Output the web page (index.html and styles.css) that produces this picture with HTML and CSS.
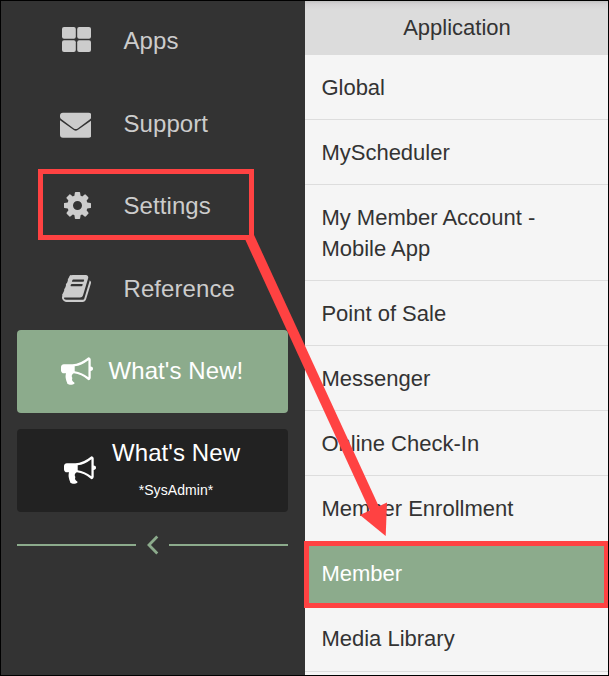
FILE: index.html
```html
<!DOCTYPE html>
<html lang="en">
<head>
<meta charset="utf-8">
<title>Settings</title>
<link rel="stylesheet" href="styles.css">
</head>
<body>
<div class="app">
  <aside class="sidebar">
    <nav class="nav">
      <a class="nav-item"><span class="nav-icon"><svg class="ico-apps" viewBox="0 0 29 25"><rect width="13.8" height="11.8" rx="2"/><rect x="15.2" width="13.8" height="11.8" rx="2"/><rect y="13.2" width="13.8" height="11.8" rx="2"/><rect x="15.2" y="13.2" width="13.8" height="11.8" rx="2"/></svg></span><span>Apps</span></a>
      <a class="nav-item"><span class="nav-icon"><svg class="ico-mail" viewBox="0 0 32 26"><path d="M3 .5H29Q32 .5 32 3.500V4.500Q32 6 30.500 7.200L18 16.500Q16 17.800 14 16.500L1.500 7.200Q0 6 0 4.500V3.500Q0 .5 3 .5ZM0 8.200L14 18.200Q16 19.400 18 18.200L32 8.200V23Q32 26 29 26H3Q0 26 0 23Z"/></svg></span><span>Support</span></a>
      <a class="nav-item"><span class="nav-icon"><svg class="ico-cog" viewBox="128 128 1536 1536"><path d="M1152 896q0-106-75-181t-181-75-181 75-75 181 75 181 181 75 181-75 75-181zm512-109v222q0 12-8 23t-20 13l-185 28q-19 54-39 91 35 50 107 138 10 12 10 25t-9 23q-27 37-99 108t-94 71q-12 0-26-9l-138-108q-44 23-91 38-16 136-29 186-7 28-36 28h-222q-14 0-24.5-8.5t-11.5-21.5l-28-184q-49-16-90-37l-141 107q-10 9-25 9-14 0-25-11-126-114-165-168-7-10-7-23 0-12 8-23 15-21 51-66.5t54-70.5q-27-50-41-99l-183-27q-13-2-21-12.5t-8-23.5v-222q0-12 8-23t19-13l186-28q14-46 39-92-40-57-107-138-10-12-10-24 0-10 9-23 26-36 98.5-107.5t94.5-71.5q13 0 26 10l138 107q44-23 91-38 16-136 29-186 7-28 36-28h222q14 0 24.5 8.5t11.5 21.5l28 184q49 16 90 37l142-107q9-9 24-9 13 0 25 10 129 119 165 170 7 8 7 22 0 12-8 23-15 21-51 66.5t-54 70.5q26 50 41 98l183 28q13 2 21 12.5t8 23.5z"/></svg></span><span>Settings</span></a>
      <a class="nav-item"><span class="nav-icon"><svg class="ico-book" viewBox="64 128 1664 1536"><path d="M1703 478q40 57 18 129l-275 906q-19 64-76.5 107.5t-122.5 43.5h-923q-77 0-148.5-53.5t-99.5-131.5q-24-67-2-127 0-4 3-27t4-37q1-8-3-21.500t-3-19.500q2-11 8-21t16.500-23.500 16.500-23.500q23-38 45-91.500t30-91.500q3-10 .5-30t-.5-28q3-11 17-28t17-23q21-36 42-92t25-90q1-9-2.500-32t.5-28q4-13 22-30.500t22-22.500q19-26 42.500-84.500t27.500-96.500q1-8-3-25.500t-2-26.500q2-8 9-18t18-23 17-21q8-12 16.500-30.500t15-35 16-36 19.500-32 26.500-23.500 36-11.500 47.500 5.500l-1 3q38-9 51-9h761q74 0 114 56t18 130l-274 906q-36 119-71.500 153.500t-128.500 34.500h-869q-27 0-38 15-11 16-1 43 24 70 144 70h923q29 0 56-15.500t35-41.500l300-987q7-22 5-57 38 15 59 43zm-1064 2q-4 13 2 22.500t20 9.500h608q13 0 25.500-9.500t16.500-22.500l21-64q4-13-2-22.500t-20-9.500h-608q-13 0-25.500 9.500t-16.500 22.500zm-83 256q-4 13 2 22.500t20 9.500h608q13 0 25.500-9.500t16.500-22.500l21-64q4-13-2-22.500t-20-9.500h-608q-13 0-25.500 9.500t-16.500 22.500z"/></svg></span><span>Reference</span></a>
    </nav>
    <div class="news">
      <a class="news-button news-green"><svg class="ico-horn" viewBox="0 0 1792 1792"><path d="M1664 640q53 0 90.500 37.500t37.500 90.500-37.500 90.500-90.500 37.500v384q0 52-38 90t-90 38q-417-347-812-380-58 19-91 66t-31 100.500 40 92.500q-20 33-23 65.500t6 58 33.500 55 48 50 61.500 50.500q-29 58-111.500 83t-168.500 11.500-132-55.500q-7-23-29.500-87.500t-32-94.500-23-89-15-101 3.500-98.500 22-110.500h-122q-66 0-113-47t-47-113v-192q0-66 47-113t113-47h480q435 0 896-384 52 0 90 38t38 90v384zm-128 604v-954q-394 302-768 343v270q377 42 768 341z"/></svg><span>What's New!</span></a>
      <a class="news-button news-dark"><svg class="ico-horn" viewBox="0 0 1792 1792"><path d="M1664 640q53 0 90.500 37.500t37.500 90.500-37.500 90.500-90.500 37.500v384q0 52-38 90t-90 38q-417-347-812-380-58 19-91 66t-31 100.500 40 92.500q-20 33-23 65.500t6 58 33.500 55 48 50 61.500 50.500q-29 58-111.500 83t-168.500 11.500-132-55.500q-7-23-29.500-87.500t-32-94.500-23-89-15-101 3.500-98.500 22-110.500h-122q-66 0-113-47t-47-113v-192q0-66 47-113t113-47h480q435 0 896-384 52 0 90 38t38 90v384zm-128 604v-954q-394 302-768 343v270q377 42 768 341z"/></svg><span class="news-stack"><span>What's New</span><span class="news-sub">*SysAdmin*</span></span></a>
    </div>
    <div class="collapse"><i class="rule"></i><svg class="chevron" viewBox="0 0 33 20"><path d="M21.300 1.500L13 10L21.300 18.500"/></svg><i class="rule"></i></div>
  </aside>
  <main class="panel">
    <header class="panel-title">Application</header>
    <ul class="list">
      <li>Global</li>
      <li>MyScheduler</li>
      <li>My Member Account - Mobile App</li>
      <li>Point of Sale</li>
      <li>Messenger</li>
      <li>Online Check-In</li>
      <li>Member Enrollment</li>
      <li class="active">Member</li>
      <li>Media Library</li>
    </ul>
  </main>
</div>
<svg class="callout" viewBox="0 0 609 676">
  <rect class="mark" x="40.500" y="171.500" width="211" height="66"/>
  <rect class="mark" x="306.500" y="543.500" width="300" height="62"/>
  <path class="shaft" d="M249.500 237L375 510"/>
  <path class="head" d="M385.700 536L360 515L387 502.500Z"/>
</svg>
<div class="frame"></div>
</body>
</html>
```

FILE: styles.css
```css
* { box-sizing: border-box; }
body {
  margin: 0;
  width: 609px;
  height: 676px;
  overflow: hidden;
  position: relative;
  font-family: "Liberation Sans", Arial, sans-serif;
}
.app { display: flex; height: 676px; }
.sidebar {
  width: 305px;
  background: #333;
  color: #ccc;
  font-size: 24px;
  letter-spacing: 0.08px;
  display: flex;
  flex-direction: column;
}
.nav-item {
  display: flex;
  align-items: center;
  height: 82.5px;
}
.nav-icon {
  width: 91px;
  margin-right: 32.5px;
  display: flex;
  justify-content: flex-end;
}
svg { display: block; fill: currentColor; flex: none; }
.ico-apps { width: 29px; height: 25px; margin-top: -3px; }
.ico-mail { width: 31.5px; height: 26px; margin-top: 2px; }
.ico-cog { width: 27px; height: 27px; margin-top: -1px; }
.ico-book { width: 29px; height: 27px; margin-top: -1px; }
.ico-horn { width: 32px; height: 32px; margin-top: -2px; }
.news {
  display: grid;
  gap: 16px;
  padding: 0 17px;
}
.news-button {
  height: 83px;
  border-radius: 4px;
  color: #fff;
  display: flex;
  align-items: center;
}
.news-green { background: #8cab8c; padding: 0 0 2px 44px; gap: 15.5px; }
.news-green .ico-horn { margin-top: 0; }
.news-dark { background: #222; padding-left: 47px; gap: 16px; }
.news-stack { display: grid; justify-items: center; }
.news-stack span { line-height: 38px; }
.news-stack .news-sub { font-size: 14px; line-height: 36px; }
.collapse {
  display: flex;
  align-items: center;
  padding: 23px 17px 0;
}
.rule { flex: 1; height: 2px; background: #8cab8c; }
.chevron { width: 33px; height: 20px; fill: none; stroke: #8cab8c; stroke-width: 2.8; }
.panel {
  width: 304px;
  background: #f5f5f5;
  color: #333;
  font-size: 22px;
  line-height: 31px;
}
.panel-title {
  height: 54.89px;
  padding-top: 12px;
  text-align: center;
  background: linear-gradient(#bbb, #d4d2d4 4px, #dcdcdc 10px);
}
.list { list-style: none; margin: 0; padding: 0; }
.list li {
  padding: 16.66px 60px 16.45px 16.4px;
  border-bottom: 1px solid #ddd;
}
.list .active { background: #8cab8c; color: #fff; }
.callout { position: absolute; left: 0; top: 0; width: 609px; height: 676px; }
.mark { fill: none; stroke: #ff4242; stroke-width: 5; }
.shaft { fill: none; stroke: #ff4242; stroke-width: 10; }
.head { fill: #ff4242; }
.frame { position: absolute; inset: 0; border: 1px solid #000; }
```
